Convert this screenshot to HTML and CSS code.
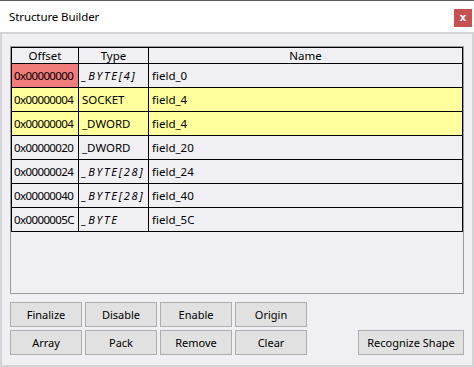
FILE: index.html
```html
<!DOCTYPE html>
<html lang="en">
<head>
    <meta charset="UTF-8">
    <title>Structure Builder</title>
    <link rel="stylesheet" href="styles.css">
</head>
<body>
    <div class="window">
        <div class="titlebar">
            <span class="title">Structure Builder</span>
            <button class="close-btn">x</button>
        </div>
        <div class="content">
            <div class="listbox">
                <table class="fields">
                    <colgroup>
                        <col class="col-offset">
                        <col class="col-type">
                        <col class="col-name">
                    </colgroup>
                    <thead>
                        <tr>
                            <th>Offset</th>
                            <th>Type</th>
                            <th>Name</th>
                        </tr>
                    </thead>
                    <tbody>
                        <tr>
                            <td class="offset error">0x00000000</td>
                            <td class="arr">_BYTE[4]</td>
                            <td>field_0</td>
                        </tr>
                        <tr class="overlap">
                            <td class="offset">0x00000004</td>
                            <td>SOCKET</td>
                            <td>field_4</td>
                        </tr>
                        <tr class="overlap">
                            <td class="offset">0x00000004</td>
                            <td>_DWORD</td>
                            <td>field_4</td>
                        </tr>
                        <tr>
                            <td class="offset">0x00000020</td>
                            <td>_DWORD</td>
                            <td>field_20</td>
                        </tr>
                        <tr>
                            <td class="offset">0x00000024</td>
                            <td class="arr">_BYTE[28]</td>
                            <td>field_24</td>
                        </tr>
                        <tr>
                            <td class="offset">0x00000040</td>
                            <td class="arr">_BYTE[28]</td>
                            <td>field_40</td>
                        </tr>
                        <tr>
                            <td class="offset">0x0000005C</td>
                            <td class="arr">_BYTE</td>
                            <td>field_5C</td>
                        </tr>
                    </tbody>
                </table>
            </div>
            <div class="actions">
                <div class="btn-grid">
                    <button class="btn">Finalize</button>
                    <button class="btn">Disable</button>
                    <button class="btn">Enable</button>
                    <button class="btn">Origin</button>
                    <button class="btn">Array</button>
                    <button class="btn">Pack</button>
                    <button class="btn">Remove</button>
                    <button class="btn">Clear</button>
                </div>
                <button class="btn btn-wide">Recognize Shape</button>
            </div>
        </div>
    </div>
</body>
</html>
```

FILE: styles.css
```css
:root {
    --dialog-bg: #f0eff3;
    --frame: #d4d4d6;
    --btn-bg: #e1e1e1;
    --btn-border: #adadad;
    --error-bg: #f07c7c;
    --overlap-bg: #ffff9e;
    --text: #000000;
}

* {
    margin: 0;
    padding: 0;
    box-sizing: border-box;
}

body {
    width: 474px;
    height: 367px;
    font-family: 'Noto Sans', 'Open Sans', sans-serif;
    font-size: 11px;
    color: var(--text);
    background: var(--dialog-bg);
    overflow: hidden;
}

.window {
    width: 474px;
    height: 367px;
    display: flex;
    flex-direction: column;
    border-top: 1px solid #5b5b5b;
}

.titlebar {
    height: 33px;
    flex-shrink: 0;
    background: #ffffff;
    border-bottom: 2px solid var(--frame);
    display: flex;
    align-items: center;
    justify-content: space-between;
    padding: 0 2px 0 9px;
}

.title {
    font-size: 11.5px;
    letter-spacing: -0.1px;
}

.close-btn {
    width: 18px;
    height: 18px;
    border: none;
    background: #c75050;
    color: #ffffff;
    font-family: 'DejaVu Sans', sans-serif;
    font-size: 10px;
    font-weight: bold;
    line-height: 16px;
    margin-top: 2px;
}

.content {
    flex: 1;
    display: flex;
    flex-direction: column;
    gap: 8px;
    padding: 12px 8px 10px 8px;
    border-left: 2px solid var(--frame);
    border-right: 2px solid var(--frame);
    border-bottom: 2px solid var(--frame);
}

.listbox {
    height: 248px;
    border: 1px solid #9a9a9e;
    background: var(--dialog-bg);
}

.fields {
    width: 452px;
    border-collapse: collapse;
    table-layout: fixed;
}

.col-offset { width: 67px; }
.col-type { width: 70px; }

.fields th,
.fields td {
    border: 1px solid #000000;
    white-space: nowrap;
    overflow: hidden;
}

.fields th {
    height: 16px;
    font-weight: normal;
    text-align: center;
    line-height: 14px;
    font-size: 11.5px;
}

.fields td {
    height: 24px;
    padding: 0 3px;
    text-align: left;
    font-size: 11.5px;
}

.fields td.offset {
    padding-left: 2px;
    letter-spacing: -0.6px;
}

.fields td.error {
    background: var(--error-bg);
}

.fields tr.overlap td {
    background: var(--overlap-bg);
}

.fields td.arr {
    font-style: italic;
    font-size: 11px;
    letter-spacing: 1.8px;
}

.actions {
    display: flex;
    justify-content: space-between;
    align-items: flex-end;
}

.btn-grid {
    display: grid;
    grid-template-columns: repeat(4, 72px);
    grid-auto-rows: 25px;
    gap: 3px;
}

.btn {
    height: 25px;
    background: var(--btn-bg);
    border: 1px solid var(--btn-border);
    font-family: inherit;
    font-size: 11px;
    color: var(--text);
}

.btn-wide {
    width: 106px;
}
```
